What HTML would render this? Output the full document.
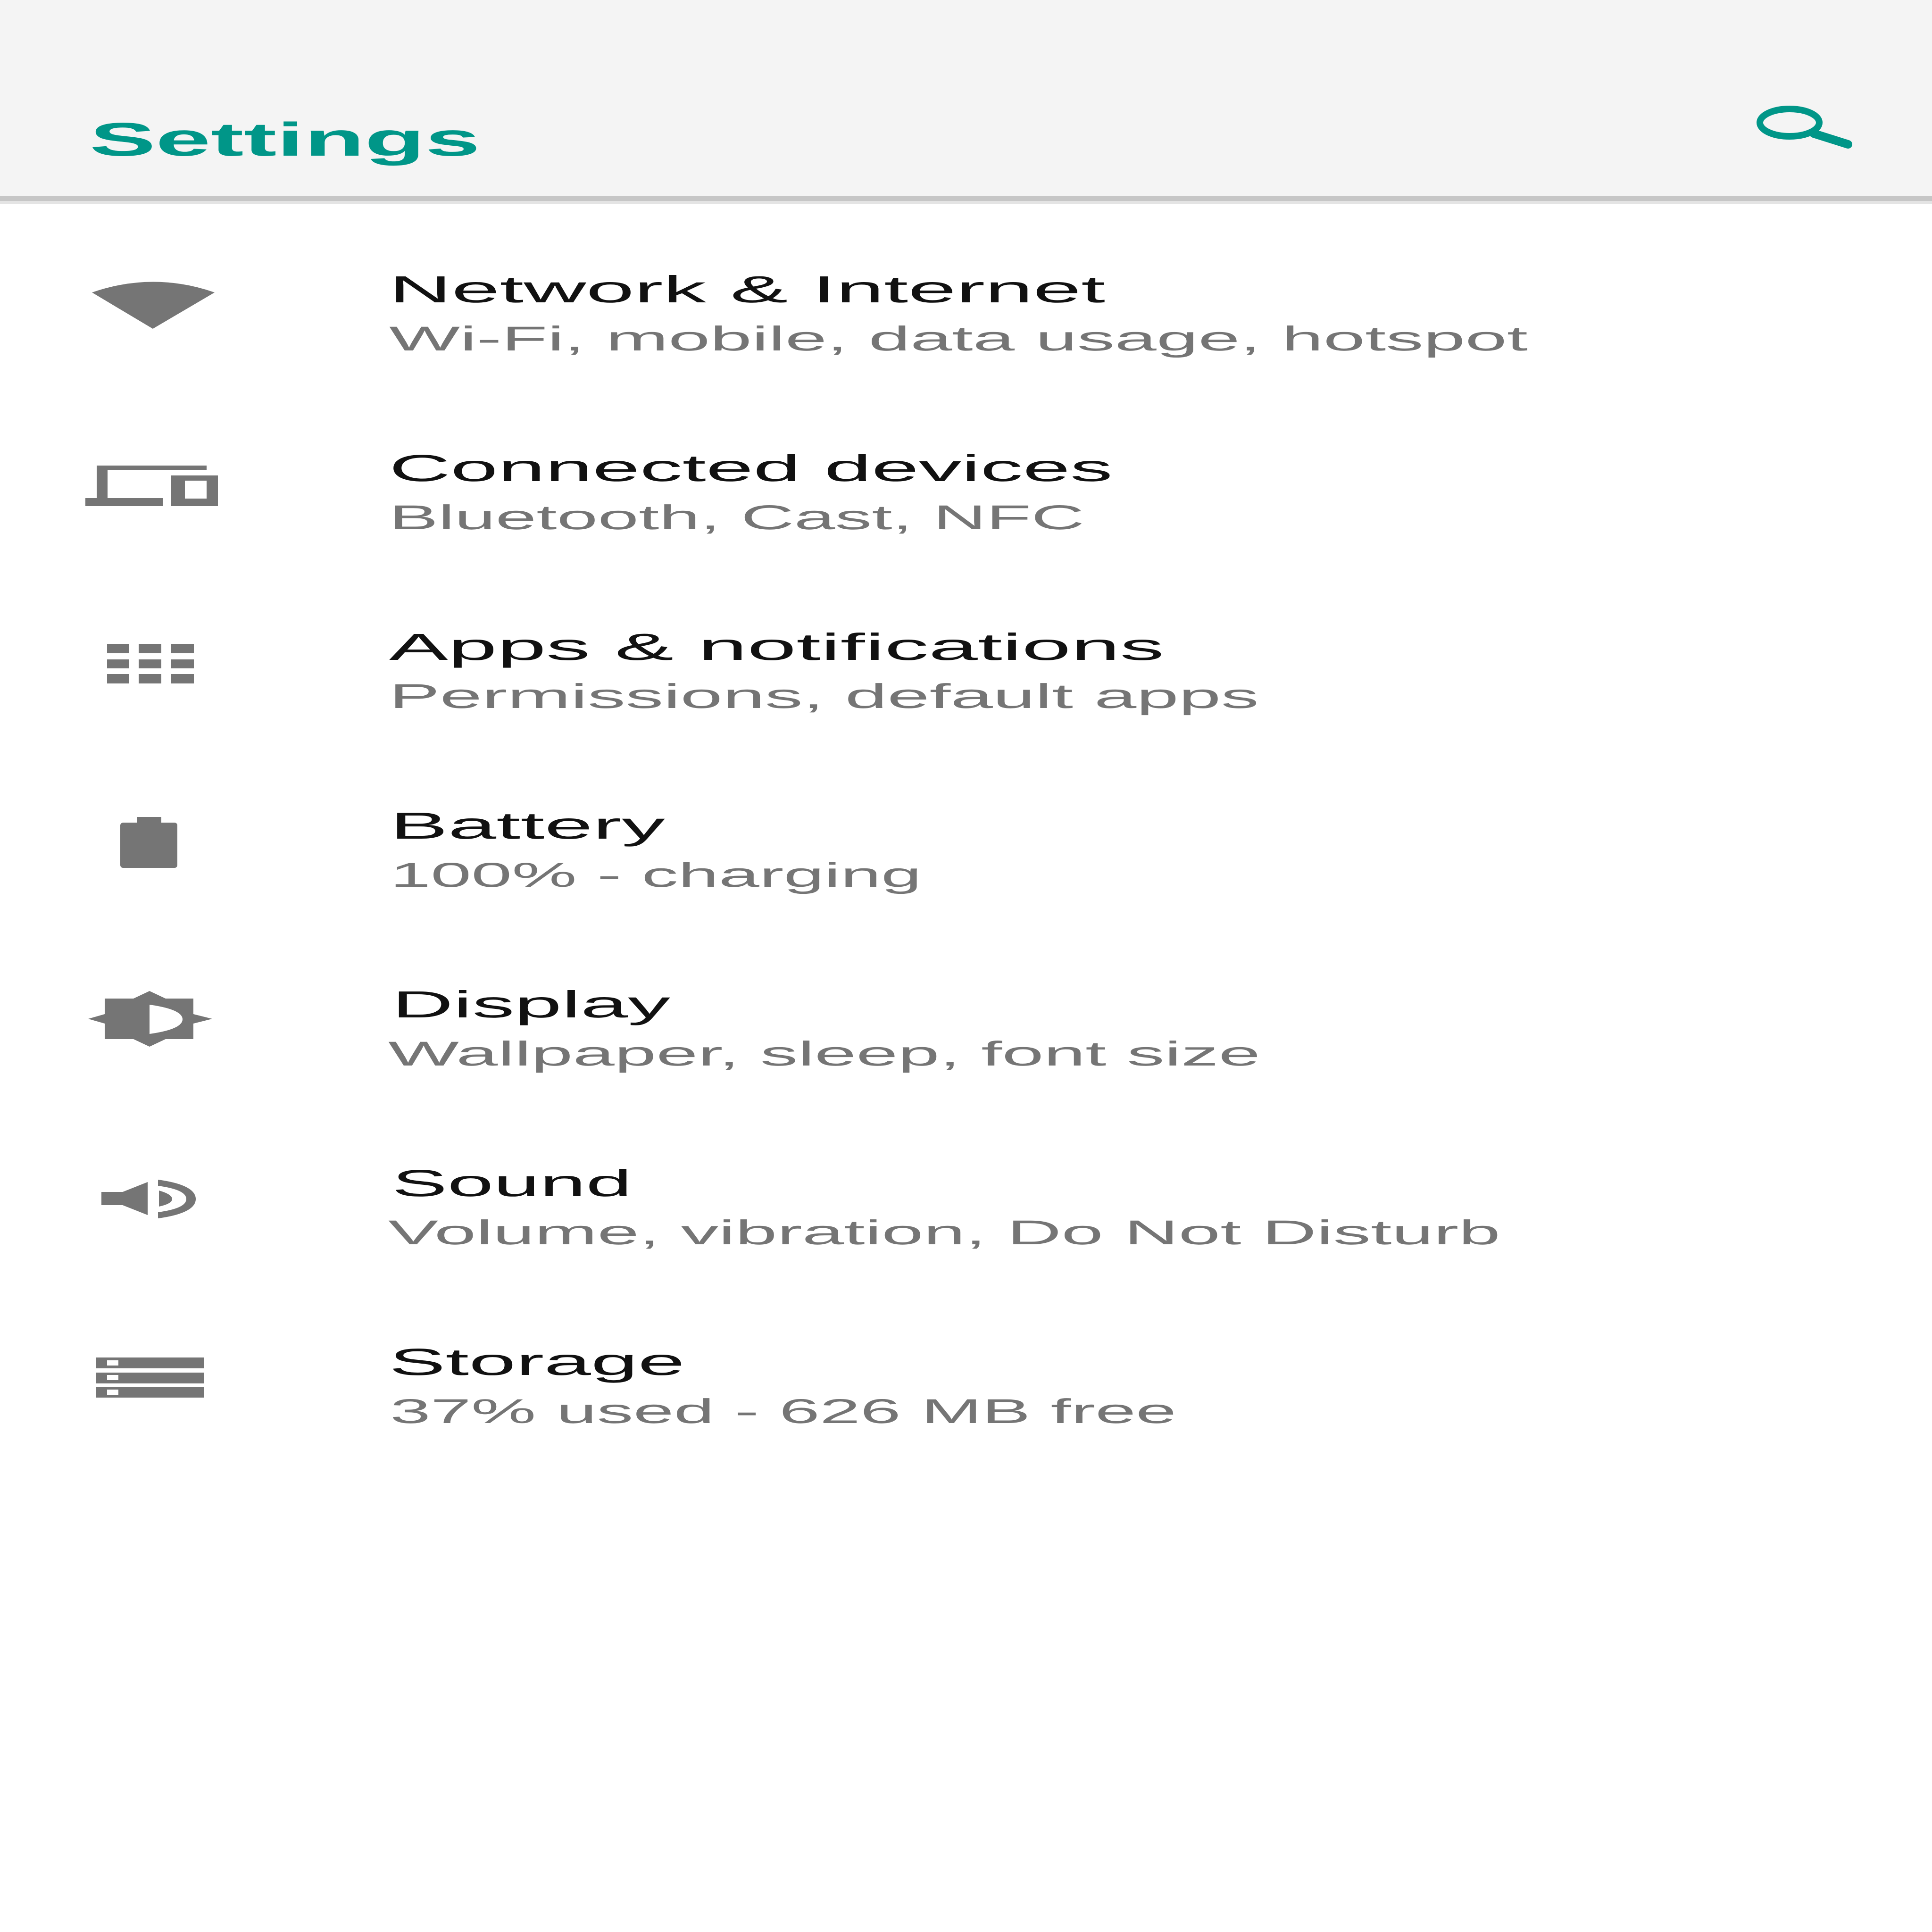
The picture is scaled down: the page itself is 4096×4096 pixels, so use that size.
<!DOCTYPE html>
<html><head><meta charset="utf-8"><style>html,body{margin:0;padding:0;background:#fff;}svg{display:block}</style></head>
<body>
<svg width="4096" height="4096" viewBox="0 0 4096 4096" xmlns="http://www.w3.org/2000/svg" font-family="Liberation Sans, sans-serif">
<rect width="4096" height="4096" fill="#fff"/>
<rect width="4096" height="418" fill="#f4f4f4"/>
<rect y="416" width="4096" height="10" fill="#c6c6c6"/>
<rect y="426" width="4096" height="6" fill="#e4e4e4"/>
<text x="190" y="330" font-size="100" font-weight="bold" fill="#009688" textLength="828" lengthAdjust="spacingAndGlyphs">Settings</text>
<ellipse cx="3794" cy="260" rx="63" ry="29" fill="none" stroke="#009688" stroke-width="14"/>
<path d="M3845 283 L3918 306" stroke="#009688" stroke-width="18" stroke-linecap="round"/>
<g fill="#757575">
<!-- wifi -->
<path d="M195 620 Q325 575 455 620 L324 697 Z"/>
<!-- devices -->
<rect x="205" y="987" width="233" height="10"/>
<rect x="205" y="987" width="23" height="75"/>
<rect x="181" y="1056" width="164" height="17"/>
<path fill-rule="evenodd" d="M363 1008 H462 V1073 H363 Z M392 1019 V1057 H438 V1019 Z"/>
<!-- apps -->
<rect x="227" y="1365" width="47" height="20"/><rect x="294" y="1365" width="48" height="20"/><rect x="363" y="1365" width="48" height="20"/>
<rect x="227" y="1398" width="47" height="19"/><rect x="294" y="1398" width="48" height="19"/><rect x="363" y="1398" width="48" height="19"/>
<rect x="227" y="1429" width="47" height="20"/><rect x="294" y="1429" width="48" height="20"/><rect x="363" y="1429" width="48" height="20"/>
<!-- battery -->
<rect x="290" y="1732" width="52" height="16"/>
<rect x="255" y="1744" width="121" height="96" rx="6"/>
<!-- display -->
<path d="M187 2160 L222 2150 V2117 H283 L317 2101 L351 2117 H410 V2150 L450 2160 L410 2170 V2203 H351 L317 2219 L283 2203 H222 V2170 Z"/>
<path d="M317 2130 Q387 2140 387 2161 Q387 2182 317 2192 Z" fill="#fff"/>
<!-- sound -->
<path d="M215 2527 H260 L313 2506 V2576 L260 2555 H215 Z"/>
<path d="M335 2501 Q415 2512 415 2542 Q415 2572 335 2583 V2570 Q395 2562 395 2542 Q395 2522 335 2514 Z"/>
<path d="M337 2524 Q365 2532 365 2542 Q365 2552 337 2558 Z"/>
<!-- storage -->
<rect x="204" y="2878" width="229" height="23"/><rect x="204" y="2910" width="229" height="23"/><rect x="204" y="2940" width="229" height="23"/>
</g>
<g fill="#fff">
<rect x="227" y="2884" width="24" height="11"/><rect x="227" y="2915" width="24" height="11"/><rect x="227" y="2946" width="24" height="11"/>
</g>
<g font-size="80" fill="#111">
<text x="825" y="641" textLength="1518" lengthAdjust="spacingAndGlyphs">Network &amp; Internet</text>
<text x="825" y="1020" textLength="1534" lengthAdjust="spacingAndGlyphs">Connected devices</text>
<text x="825" y="1399" textLength="1643" lengthAdjust="spacingAndGlyphs">Apps &amp; notifications</text>
<text x="827" y="1778" textLength="583" lengthAdjust="spacingAndGlyphs">Battery</text>
<text x="831" y="2157" textLength="590" lengthAdjust="spacingAndGlyphs">Display</text>
<text x="831" y="2536" textLength="509" lengthAdjust="spacingAndGlyphs">Sound</text>
<text x="825" y="2915" textLength="627" lengthAdjust="spacingAndGlyphs">Storage</text>
</g>
<g font-size="73" fill="#757575">
<text x="825" y="743" textLength="2414" lengthAdjust="spacingAndGlyphs">Wi-Fi, mobile, data usage, hotspot</text>
<text x="825" y="1122" textLength="1474" lengthAdjust="spacingAndGlyphs">Bluetooth, Cast, NFC</text>
<text x="825" y="1501" textLength="1844" lengthAdjust="spacingAndGlyphs">Permissions, default apps</text>
<text x="827" y="1880" textLength="1127" lengthAdjust="spacingAndGlyphs">100% - charging</text>
<text x="823" y="2259" textLength="1849" lengthAdjust="spacingAndGlyphs">Wallpaper, sleep, font size</text>
<text x="823" y="2638" textLength="2358" lengthAdjust="spacingAndGlyphs">Volume, vibration, Do Not Disturb</text>
<text x="827" y="3017" textLength="1667" lengthAdjust="spacingAndGlyphs">37% used - 626 MB free</text>
</g>
</svg>
</body></html>
